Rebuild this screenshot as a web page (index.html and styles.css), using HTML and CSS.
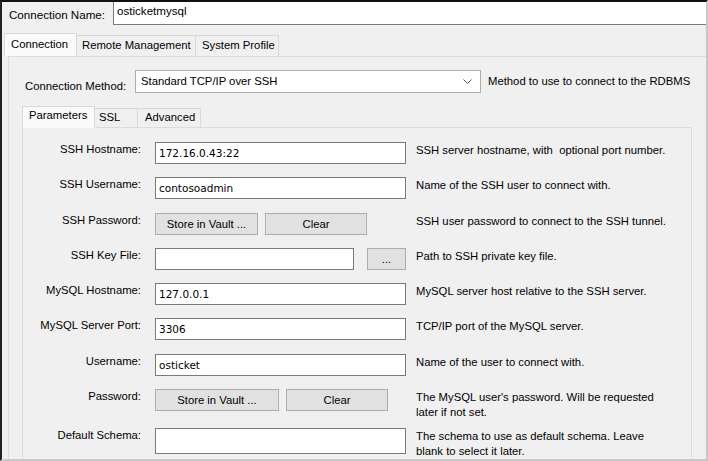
FILE: index.html
```html
<!DOCTYPE html>
<html>
<head>
<meta charset="utf-8">
<link rel="stylesheet" href="styles.css">
</head>
<body>
<div class="window">
  <div class="name-row">
    <span class="name-label">Connection Name:</span>
    <div class="name-input">osticketmysql</div>
  </div>
  <div class="tabs outer-tabs">
    <div class="tab active">Connection</div>
    <div class="tab">Remote Management</div>
    <div class="tab">System Profile</div>
  </div>
  <div class="outer-panel">
    <div class="method-row">
      <span class="method-label">Connection Method:</span>
      <div class="select">
        <span>Standard TCP/IP over SSH</span>
        <svg class="chev" width="9" height="6" viewBox="0 0 9 6"><path d="M0.5 0.5 L4.5 4.5 L8.5 0.5" fill="none" stroke="#555" stroke-width="1"/></svg>
      </div>
      <span class="method-desc">Method to use to connect to the RDBMS</span>
    </div>
    <div class="tabs inner-tabs">
      <div class="tab active">Parameters</div>
      <div class="tab">SSL</div>
      <div class="tab">Advanced</div>
    </div>
    <div class="inner-panel">
      <div class="form">
        <div class="lbl">SSH Hostname:</div>
        <div class="field"><div class="input">172.16.0.43:22</div></div>
        <div class="desc">SSH server hostname, with&nbsp; optional port number.</div>

        <div class="lbl">SSH Username:</div>
        <div class="field"><div class="input">contosoadmin</div></div>
        <div class="desc">Name of the SSH user to connect with.</div>

        <div class="lbl">SSH Password:</div>
        <div class="field btns"><div class="btn vault1">Store in Vault ...</div><div class="btn clear">Clear</div></div>
        <div class="desc">SSH user password to connect to the SSH tunnel.</div>

        <div class="lbl">SSH Key File:</div>
        <div class="field keyfile"><div class="input key"></div><div class="btn dots">...</div></div>
        <div class="desc">Path to SSH private key file.</div>

        <div class="lbl">MySQL Hostname:</div>
        <div class="field"><div class="input">127.0.0.1</div></div>
        <div class="desc">MySQL server host relative to the SSH server.</div>

        <div class="lbl">MySQL Server Port:</div>
        <div class="field"><div class="input">3306</div></div>
        <div class="desc">TCP/IP port of the MySQL server.</div>

        <div class="lbl">Username:</div>
        <div class="field"><div class="input">osticket</div></div>
        <div class="desc">Name of the user to connect with.</div>

        <div class="lbl">Password:</div>
        <div class="field btns"><div class="btn vault2">Store in Vault ...</div><div class="btn clear">Clear</div></div>
        <div class="desc">The MySQL user's password. Will be requested<br>later if not set.</div>

        <div class="lbl">Default Schema:</div>
        <div class="field"><div class="input tall"></div></div>
        <div class="desc">The schema to use as default schema. Leave<br>blank to select it later.</div>
      </div>
    </div>
  </div>
</div>
</body>
</html>
```
FILE: styles.css
```css
html, body {
  margin: 0;
  padding: 0;
  background: #f0f0f0;
  width: 708px;
  height: 461px;
  overflow: hidden;
}
body {
  font-family: "Liberation Sans", Arial, sans-serif;
  font-size: 11.3px;
  color: #000;
}
.window {
  box-sizing: border-box;
  width: 708px;
  height: 461px;
  border-top: 2px solid #111;
  border-left: 2px solid #222;
  border-right: 2px solid #c8c8c8;
  border-bottom: 2px solid #c8c8c8;
  display: flex;
  flex-direction: column;
}
.name-row {
  display: flex;
  align-items: stretch;
  height: 23px;
}
.name-label {
  padding: 6px 0 0 7px;
  width: 104px;
  font-size: 11.6px;
}
.name-input {
  flex: 1;
  background: #fff;
  border-bottom: 1px solid #7a7a7a;
  border-left: 1px solid #7a7a7a;
  padding: 2px 0 0 3px;
  font-size: 11.6px;
}
.tabs {
  display: flex;
  align-items: flex-end;
  white-space: nowrap;
}
.outer-tabs {
  margin-top: 8px;
  padding-left: 3px;
  height: 23px;
}
.tab {
  box-sizing: border-box;
  border: 1px solid #d9d9d9;
  border-bottom: none;
  background: #f0f0f0;
  padding: 3px 4px 0 5px;
  height: 21px;
  margin-left: -1px;
}
.tab.active {
  background: #fafafa;
  height: 23px;
  position: relative;
  z-index: 1;
  padding-top: 4px;
}
.outer-tabs .tab:nth-child(1) { width: 73px; padding-left: 6px; }
.outer-tabs .tab:nth-child(2) { width: 120px; padding-left: 5px; }
.outer-tabs .tab:nth-child(3) { width: 84px; padding-left: 6px; }
.outer-panel {
  flex: 1;
  margin-left: 6px;
  border-top: 1px solid #dcdcdc;
  border-left: 1px solid #dcdcdc;
  display: flex;
  flex-direction: column;
}
.method-row {
  display: flex;
  align-items: flex-start;
  margin-top: 13px;
  height: 22px;
}
.method-label {
  padding: 10px 0 0 16px;
  width: 110px;
}
.select {
  box-sizing: border-box;
  width: 346px;
  height: 23px;
  background: #fff;
  border: 1px solid #adadad;
  display: flex;
  align-items: center;
  justify-content: space-between;
  padding: 0 8px 2px 5px;
}
.chev { margin-top: 2px; }
.method-desc {
  padding: 5px 0 0 7px;
}
.inner-tabs {
  margin-top: 14px;
  padding-left: 14px;
  height: 22px;
}
.inner-tabs .tab { height: 20px; padding-top: 2px; }
.inner-tabs .tab.active { height: 22px; padding-top: 2px; }
.inner-tabs .tab:nth-child(1) { width: 73px; padding-left: 6px; }
.inner-tabs .tab:nth-child(2) { width: 43px; border-left: none; margin-left: 0; padding-left: 4px; }
.inner-tabs .tab:nth-child(3) { width: 64px; padding-left: 7px; }
.inner-panel {
  flex: 1;
  margin-left: 13px;
  width: 670px;
  box-sizing: border-box;
  border: 1px solid #dcdcdc;
  border-bottom: none;
  margin-top: -1px;
}
.form {
  display: grid;
  grid-template-columns: 118px 251px 1fr;
  grid-template-rows: repeat(7, 22px) 26px 26px;
  column-gap: 14px;
  row-gap: 13.3px;
  padding-top: 14px;
}
.form > :nth-child(3n+3) { margin-left: -4px; }
.lbl {
  text-align: right;
  padding-top: 1px;
}
.desc {
  padding-top: 1px;
  line-height: 15px;
}
.field {
  display: flex;
  gap: 7px;
  align-items: flex-start;
}
.input {
  box-sizing: border-box;
  background: #fff;
  border: 1px solid #7a7a7a;
  width: 251px;
  height: 22px;
  padding: 4px 0 0 3px;
  font-family: "DejaVu Sans", Tahoma, sans-serif;
  font-size: 10.5px;
}
.input.tall { height: 26px; }
.input.key { width: 199px; }
.keyfile { gap: 13px; }
.btn {
  box-sizing: border-box;
  background: #e1e1e1;
  border: 1px solid #adadad;
  height: 22px;
  text-align: center;
  padding-top: 4px;
}
.vault1 { width: 103px; }
.vault2 { width: 124px; }
.clear { width: 102px; }
.dots { width: 39px; }
```
